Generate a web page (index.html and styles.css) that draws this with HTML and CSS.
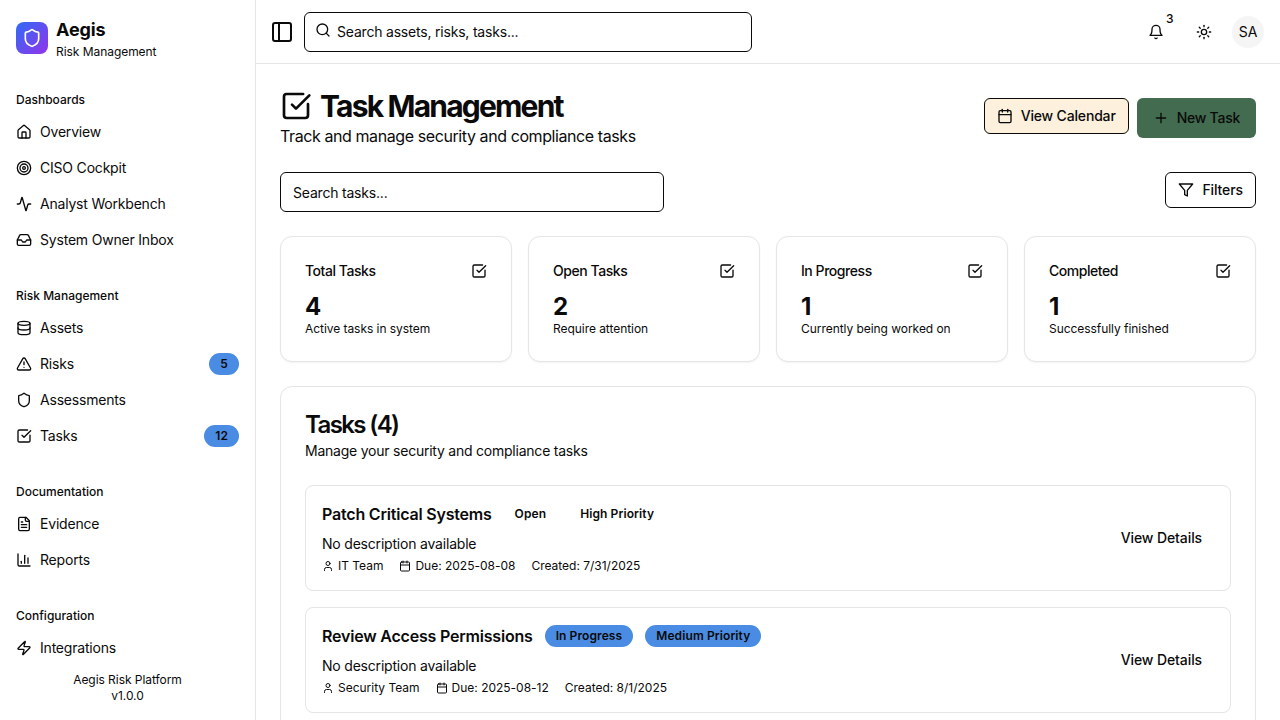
FILE: index.html
```html
<!DOCTYPE html>
<html lang="en">
<head>
    <meta charset="UTF-8">
    <meta name="viewport" content="width=device-width, initial-scale=1.0">
    <title>Aegis - Task Management</title>
    <link rel="stylesheet" href="styles.css">
</head>
<body>
    <!-- Icon sprite -->
    <svg class="sprite" xmlns="http://www.w3.org/2000/svg">
        <symbol id="i-home" viewBox="0 0 24 24"><path d="M15 21v-8a1 1 0 0 0-1-1h-4a1 1 0 0 0-1 1v8"/><path d="M3 10a2 2 0 0 1 .709-1.528l7-5.999a2 2 0 0 1 2.582 0l7 5.999A2 2 0 0 1 21 10v9a2 2 0 0 1-2 2H5a2 2 0 0 1-2-2z"/></symbol>
        <symbol id="i-target" viewBox="0 0 24 24"><circle cx="12" cy="12" r="10"/><circle cx="12" cy="12" r="6"/><circle cx="12" cy="12" r="2"/></symbol>
        <symbol id="i-activity" viewBox="0 0 24 24"><path d="M22 12h-2.48a2 2 0 0 0-1.93 1.46l-2.35 8.36a.25.25 0 0 1-.48 0L9.24 2.18a.25.25 0 0 0-.48 0l-2.35 8.36A2 2 0 0 1 4.49 12H2"/></symbol>
        <symbol id="i-inbox" viewBox="0 0 24 24"><polyline points="22 12 16 12 14 15 10 15 8 12 2 12"/><path d="M5.45 5.11 2 12v6a2 2 0 0 0 2 2h16a2 2 0 0 0 2-2v-6l-3.45-6.89A2 2 0 0 0 16.76 4H7.24a2 2 0 0 0-1.79 1.11z"/></symbol>
        <symbol id="i-database" viewBox="0 0 24 24"><ellipse cx="12" cy="5" rx="9" ry="3"/><path d="M3 5V19A9 3 0 0 0 21 19V5"/><path d="M3 12A9 3 0 0 0 21 12"/></symbol>
        <symbol id="i-alert" viewBox="0 0 24 24"><path d="m21.73 18-8-14a2 2 0 0 0-3.48 0l-8 14A2 2 0 0 0 4 21h16a2 2 0 0 0 1.73-3"/><path d="M12 9v4"/><path d="M12 17h.01"/></symbol>
        <symbol id="i-shield" viewBox="0 0 24 24"><path d="M20 13c0 5-3.5 7.5-7.66 8.95a1 1 0 0 1-.67-.01C7.5 20.5 4 18 4 13V6a1 1 0 0 1 1-1c2 0 4.5-1.2 6.24-2.72a1.17 1.17 0 0 1 1.52 0C14.51 3.81 17 5 19 5a1 1 0 0 1 1 1z"/></symbol>
        <symbol id="i-check" viewBox="0 0 24 24"><path d="M21 10.656V19a2 2 0 0 1-2 2H5a2 2 0 0 1-2-2V5a2 2 0 0 1 2-2h12.344"/><path d="m9 11 3 3L22 4"/></symbol>
        <symbol id="i-file" viewBox="0 0 24 24"><path d="M15 2H6a2 2 0 0 0-2 2v16a2 2 0 0 0 2 2h12a2 2 0 0 0 2-2V7Z"/><path d="M14 2v4a2 2 0 0 0 2 2h4"/><path d="M10 9H8"/><path d="M16 13H8"/><path d="M16 17H8"/></symbol>
        <symbol id="i-chart" viewBox="0 0 24 24"><path d="M3 3v16a2 2 0 0 0 2 2h16"/><path d="M18 17V9"/><path d="M13 17V5"/><path d="M8 17v-3"/></symbol>
        <symbol id="i-zap" viewBox="0 0 24 24"><path d="M4 14a1 1 0 0 1-.78-1.63l9.9-10.2a.5.5 0 0 1 .86.46l-1.92 6.02A1 1 0 0 0 13 10h7a1 1 0 0 1 .78 1.63l-9.9 10.2a.5.5 0 0 1-.86-.46l1.92-6.02A1 1 0 0 0 11 14z"/></symbol>
        <symbol id="i-panel" viewBox="0 0 24 24"><rect width="18" height="18" x="3" y="3" rx="2"/><path d="M9 3v18"/></symbol>
        <symbol id="i-search" viewBox="0 0 24 24"><circle cx="11" cy="11" r="8"/><path d="m21 21-4.3-4.3"/></symbol>
        <symbol id="i-bell" viewBox="0 0 24 24"><path d="M6 8a6 6 0 0 1 12 0c0 7 3 9 3 9H3s3-2 3-9"/><path d="M10.3 21a1.94 1.94 0 0 0 3.4 0"/></symbol>
        <symbol id="i-sun" viewBox="0 0 24 24"><circle cx="12" cy="12" r="4"/><path d="M12 2v2"/><path d="M12 20v2"/><path d="m4.93 4.93 1.41 1.41"/><path d="m17.66 17.66 1.41 1.41"/><path d="M2 12h2"/><path d="M20 12h2"/><path d="m6.34 17.66-1.41 1.41"/><path d="m19.07 4.93-1.41 1.41"/></symbol>
        <symbol id="i-calendar" viewBox="0 0 24 24"><path d="M8 2v4"/><path d="M16 2v4"/><rect width="18" height="18" x="3" y="4" rx="2"/><path d="M3 10h18"/></symbol>
        <symbol id="i-plus" viewBox="0 0 24 24"><path d="M5 12h14"/><path d="M12 5v14"/></symbol>
        <symbol id="i-filter" viewBox="0 0 24 24"><polygon points="22 3 2 3 10 12.46 10 19 14 21 14 12.46 22 3"/></symbol>
        <symbol id="i-user" viewBox="0 0 24 24"><path d="M19 21v-2a4 4 0 0 0-4-4H9a4 4 0 0 0-4 4v2"/><circle cx="12" cy="7" r="4"/></symbol>
    </svg>

    <div class="app">
        <!-- Sidebar -->
        <aside class="sidebar">
            <div class="brand">
                <div class="brand-logo"><svg class="icon icon-20"><use href="#i-shield"/></svg></div>
                <div class="brand-text">
                    <div class="brand-name">Aegis</div>
                    <div class="brand-sub">Risk Management</div>
                </div>
            </div>

            <nav class="nav">
                <div class="nav-group">
                    <div class="nav-label">Dashboards</div>
                    <a class="nav-item"><svg class="icon"><use href="#i-home"/></svg>Overview</a>
                    <a class="nav-item"><svg class="icon"><use href="#i-target"/></svg>CISO Cockpit</a>
                    <a class="nav-item"><svg class="icon"><use href="#i-activity"/></svg>Analyst Workbench</a>
                    <a class="nav-item"><svg class="icon"><use href="#i-inbox"/></svg>System Owner Inbox</a>
                </div>
                <div class="nav-group">
                    <div class="nav-label">Risk Management</div>
                    <a class="nav-item"><svg class="icon"><use href="#i-database"/></svg>Assets</a>
                    <a class="nav-item"><svg class="icon"><use href="#i-alert"/></svg>Risks<span class="badge nav-badge">5</span></a>
                    <a class="nav-item"><svg class="icon"><use href="#i-shield"/></svg>Assessments</a>
                    <a class="nav-item"><svg class="icon"><use href="#i-check"/></svg>Tasks<span class="badge nav-badge">12</span></a>
                </div>
                <div class="nav-group">
                    <div class="nav-label">Documentation</div>
                    <a class="nav-item"><svg class="icon"><use href="#i-file"/></svg>Evidence</a>
                    <a class="nav-item"><svg class="icon"><use href="#i-chart"/></svg>Reports</a>
                </div>
                <div class="nav-group">
                    <div class="nav-label">Configuration</div>
                    <a class="nav-item"><svg class="icon"><use href="#i-zap"/></svg>Integrations</a>
                </div>
            </nav>

            <div class="sidebar-footer">
                <div>Aegis Risk Platform</div>
                <div>v1.0.0</div>
            </div>
        </aside>

        <div class="content">
            <!-- Top bar -->
            <header class="topbar">
                <svg class="icon icon-24"><use href="#i-panel"/></svg>
                <div class="field global-search">
                    <svg class="icon"><use href="#i-search"/></svg>
                    <span>Search assets, risks, tasks...</span>
                </div>
                <div class="topbar-actions">
                    <div class="bell">
                        <svg class="icon"><use href="#i-bell"/></svg>
                        <span class="bell-count">3</span>
                    </div>
                    <svg class="icon"><use href="#i-sun"/></svg>
                    <div class="avatar">SA</div>
                </div>
            </header>

            <main class="main">
                <div class="page-head">
                    <div>
                        <h1 class="page-title"><svg class="icon icon-32"><use href="#i-check"/></svg>Task Management</h1>
                        <p class="page-sub">Track and manage security and compliance tasks</p>
                    </div>
                    <div class="page-actions">
                        <button class="btn btn-cream"><svg class="icon"><use href="#i-calendar"/></svg>View Calendar</button>
                        <button class="btn btn-green"><svg class="icon"><use href="#i-plus"/></svg>New Task</button>
                    </div>
                </div>

                <div class="filter-row">
                    <div class="field task-search"><span>Search tasks...</span></div>
                    <button class="btn btn-outline"><svg class="icon"><use href="#i-filter"/></svg>Filters</button>
                </div>

                <div class="stats">
                    <div class="card stat">
                        <div class="stat-top"><span>Total Tasks</span><svg class="icon"><use href="#i-check"/></svg></div>
                        <div class="stat-value">4</div>
                        <div class="stat-note">Active tasks in system</div>
                    </div>
                    <div class="card stat">
                        <div class="stat-top"><span>Open Tasks</span><svg class="icon"><use href="#i-check"/></svg></div>
                        <div class="stat-value">2</div>
                        <div class="stat-note">Require attention</div>
                    </div>
                    <div class="card stat">
                        <div class="stat-top"><span>In Progress</span><svg class="icon"><use href="#i-check"/></svg></div>
                        <div class="stat-value">1</div>
                        <div class="stat-note">Currently being worked on</div>
                    </div>
                    <div class="card stat">
                        <div class="stat-top"><span>Completed</span><svg class="icon"><use href="#i-check"/></svg></div>
                        <div class="stat-value">1</div>
                        <div class="stat-note">Successfully finished</div>
                    </div>
                </div>

                <section class="card tasks">
                    <h2 class="tasks-title">Tasks (4)</h2>
                    <p class="tasks-sub">Manage your security and compliance tasks</p>

                    <div class="task-list">
                        <article class="task">
                            <div class="task-body">
                                <div class="task-head">
                                    <h3 class="task-name">Patch Critical Systems</h3>
                                    <span class="badge badge-plain">Open</span>
                                    <span class="badge badge-plain">High Priority</span>
                                </div>
                                <p class="task-desc">No description available</p>
                                <div class="task-meta">
                                    <span class="meta-item"><svg class="icon icon-12"><use href="#i-user"/></svg>IT Team</span>
                                    <span class="meta-item"><svg class="icon icon-12"><use href="#i-calendar"/></svg>Due: 2025-08-08</span>
                                    <span>Created: 7/31/2025</span>
                                </div>
                            </div>
                            <button class="btn-ghost">View Details</button>
                        </article>

                        <article class="task">
                            <div class="task-body">
                                <div class="task-head">
                                    <h3 class="task-name">Review Access Permissions</h3>
                                    <span class="badge">In Progress</span>
                                    <span class="badge">Medium Priority</span>
                                </div>
                                <p class="task-desc">No description available</p>
                                <div class="task-meta">
                                    <span class="meta-item"><svg class="icon icon-12"><use href="#i-user"/></svg>Security Team</span>
                                    <span class="meta-item"><svg class="icon icon-12"><use href="#i-calendar"/></svg>Due: 2025-08-12</span>
                                    <span>Created: 8/1/2025</span>
                                </div>
                            </div>
                            <button class="btn-ghost">View Details</button>
                        </article>
                    </div>
                </section>
            </main>
        </div>
    </div>
</body>
</html>
```

FILE: styles.css
```css
/* Global Styles */
* {
    box-sizing: border-box;
}

body, html {
    margin: 0;
    padding: 0;
    height: 100%;
    font-family: 'Inter', 'Liberation Sans', sans-serif;
    font-size: 14px;
    line-height: 20px;
    letter-spacing: -0.2px;
    color: #0a0a0a;
    background: #fff;
    overflow: hidden;
}

h1, h2, h3, p {
    margin: 0;
}

.sprite {
    display: none;
}

.icon {
    width: 16px;
    height: 16px;
    flex-shrink: 0;
    fill: none;
    stroke: currentColor;
    stroke-width: 2;
    stroke-linecap: round;
    stroke-linejoin: round;
}

.icon-12 { width: 12px; height: 12px; }
.icon-20 { width: 20px; height: 20px; }
.icon-24 { width: 24px; height: 24px; }
.icon-32 { width: 32px; height: 32px; }

.app {
    display: flex;
    height: 720px;
}

/* Sidebar */
.sidebar {
    width: 256px;
    flex-shrink: 0;
    display: flex;
    flex-direction: column;
    border-right: 1px solid #e5e5e5;
    padding: 0 8px;
}

.brand {
    display: flex;
    align-items: center;
    gap: 8px;
    height: 76px;
    padding: 0 8px;
}

.brand-logo {
    width: 32px;
    height: 32px;
    border-radius: 8px;
    display: flex;
    align-items: center;
    justify-content: center;
    color: #fff;
    background: linear-gradient(135deg, #2f6cf5, #9333ea);
}

.brand-name {
    font-size: 18px;
    line-height: 28px;
    font-weight: 700;
    letter-spacing: -0.1px;
}

.brand-sub {
    font-size: 12px;
    line-height: 16px;
    letter-spacing: -0.05px;
}

.nav {
    flex: 1;
    padding-top: 16px;
}

.nav-group {
    margin-bottom: 30px;
}

.nav-group:last-child {
    margin-bottom: 0;
}

.nav-label {
    font-size: 12px;
    line-height: 16px;
    font-weight: 500;
    letter-spacing: 0;
    padding: 0 8px;
    margin-bottom: 6px;
}

.nav-item {
    display: flex;
    align-items: center;
    gap: 8px;
    height: 36px;
    padding: 0 8px;
}

.nav-badge {
    margin-left: auto;
}

.sidebar-footer {
    font-size: 12px;
    line-height: 16px;
    letter-spacing: -0.05px;
    text-align: center;
    padding-bottom: 16px;
}

/* Badges */
.badge {
    display: inline-flex;
    align-items: center;
    height: 22px;
    padding: 0 11px;
    border-radius: 11px;
    background: #4a8ce3;
    font-size: 12px;
    font-weight: 600;
    line-height: 16px;
    letter-spacing: 0.1px;
}

.badge-plain {
    background: transparent;
}

/* Top bar */
.content {
    flex: 1;
    min-width: 0;
    display: flex;
    flex-direction: column;
}

.topbar {
    display: flex;
    align-items: center;
    gap: 10px;
    height: 64px;
    flex-shrink: 0;
    padding: 0 16px 0 14px;
    border-bottom: 1px solid #e5e5e5;
}

.field {
    display: flex;
    align-items: center;
    height: 40px;
    border: 1px solid #0a0a0a;
    border-radius: 6px;
    background: #fff;
}

.global-search {
    width: 448px;
    gap: 6px;
    padding: 0 10px;
}

.global-search .icon {
    margin-top: -3px;
}

.topbar-actions {
    margin-left: auto;
    display: flex;
    align-items: center;
    gap: 32px;
}

.bell {
    position: relative;
    display: flex;
}

.bell-count {
    position: absolute;
    top: -13px;
    left: 18px;
    font-size: 12px;
    font-weight: 500;
    line-height: 16px;
}

.avatar {
    width: 32px;
    height: 32px;
    margin-left: -12px;
    border-radius: 50%;
    background: #f5f5f5;
    display: flex;
    align-items: center;
    justify-content: center;
    letter-spacing: 0;
}

/* Page */
.main {
    flex: 1;
    min-height: 0;
    overflow: hidden;
    padding: 24px;
}

.page-head {
    display: flex;
    justify-content: space-between;
    align-items: center;
    margin-bottom: 24px;
}

.page-title {
    display: flex;
    align-items: center;
    gap: 8px;
    font-size: 30px;
    line-height: 36px;
    font-weight: 700;
    letter-spacing: -1.8px;
}

.page-sub {
    font-size: 16px;
    line-height: 24px;
    letter-spacing: -0.41px;
}

.page-actions {
    display: flex;
    align-items: flex-start;
    gap: 8px;
}

.btn {
    display: inline-flex;
    align-items: center;
    gap: 8px;
    height: 36px;
    padding: 0 12px 2px;
    border: 1px solid #0a0a0a;
    border-radius: 6px;
    background: #fff;
    color: #0a0a0a;
    font-family: inherit;
    font-size: 14px;
    font-weight: 500;
    letter-spacing: -0.1px;
}

.btn .icon {
    margin-top: 2px;
}

.btn-cream {
    background: #fdf0dc;
    letter-spacing: -0.17px;
}

.btn-green {
    height: 40px;
    padding: 0 16px 2px;
    border: none;
    background: #426b4f;
    letter-spacing: -0.25px;
}

.filter-row {
    display: flex;
    justify-content: space-between;
    align-items: flex-start;
    margin-bottom: 24px;
}

.task-search {
    width: 384px;
    padding: 2px 12px 0;
}

/* Cards */
.card {
    background: #fff;
    border: 1px solid #e5e5e5;
    border-radius: 12px;
    box-shadow: 0 1px 2px rgba(0, 0, 0, 0.05);
}

.stats {
    display: grid;
    grid-template-columns: repeat(4, 1fr);
    gap: 16px;
    margin-bottom: 24px;
}

.stat {
    height: 126px;
    padding: 24px;
}

.stat-top {
    display: flex;
    justify-content: space-between;
    align-items: center;
    font-weight: 500;
    letter-spacing: -0.45px;
}

.stat-value {
    margin-top: 10px;
    font-size: 24px;
    line-height: 32px;
    font-weight: 700;
}

.stat-note {
    margin-top: -2px;
    font-size: 12px;
    line-height: 16px;
    letter-spacing: -0.05px;
}

/* Task list */
.tasks {
    padding: 24px;
    box-shadow: none;
}

.tasks-title {
    font-size: 24px;
    line-height: 28px;
    font-weight: 600;
    letter-spacing: -1.6px;
}

.tasks-sub {
    margin-top: 2px;
    letter-spacing: -0.23px;
}

.task-list {
    display: flex;
    flex-direction: column;
    gap: 16px;
    margin-top: 24px;
}

.task {
    display: flex;
    align-items: center;
    justify-content: space-between;
    height: 106px;
    padding: 0 16px;
    border: 1px solid #e5e5e5;
    border-radius: 8px;
}

.task-head {
    display: flex;
    align-items: center;
    gap: 12px;
    margin-bottom: 8px;
}

.task-name {
    font-size: 16px;
    line-height: 24px;
    font-weight: 600;
    letter-spacing: -0.2px;
}

.task-meta {
    display: flex;
    align-items: center;
    gap: 16px;
    margin-top: 4px;
    font-size: 12px;
    line-height: 16px;
    letter-spacing: -0.01px;
}

.meta-item {
    display: flex;
    align-items: center;
    gap: 4px;
}

.btn-ghost {
    height: 36px;
    padding: 0 12px 2px;
    border: none;
    background: transparent;
    color: #0a0a0a;
    font-family: inherit;
    font-size: 14px;
    font-weight: 500;
    letter-spacing: -0.1px;
}
```
